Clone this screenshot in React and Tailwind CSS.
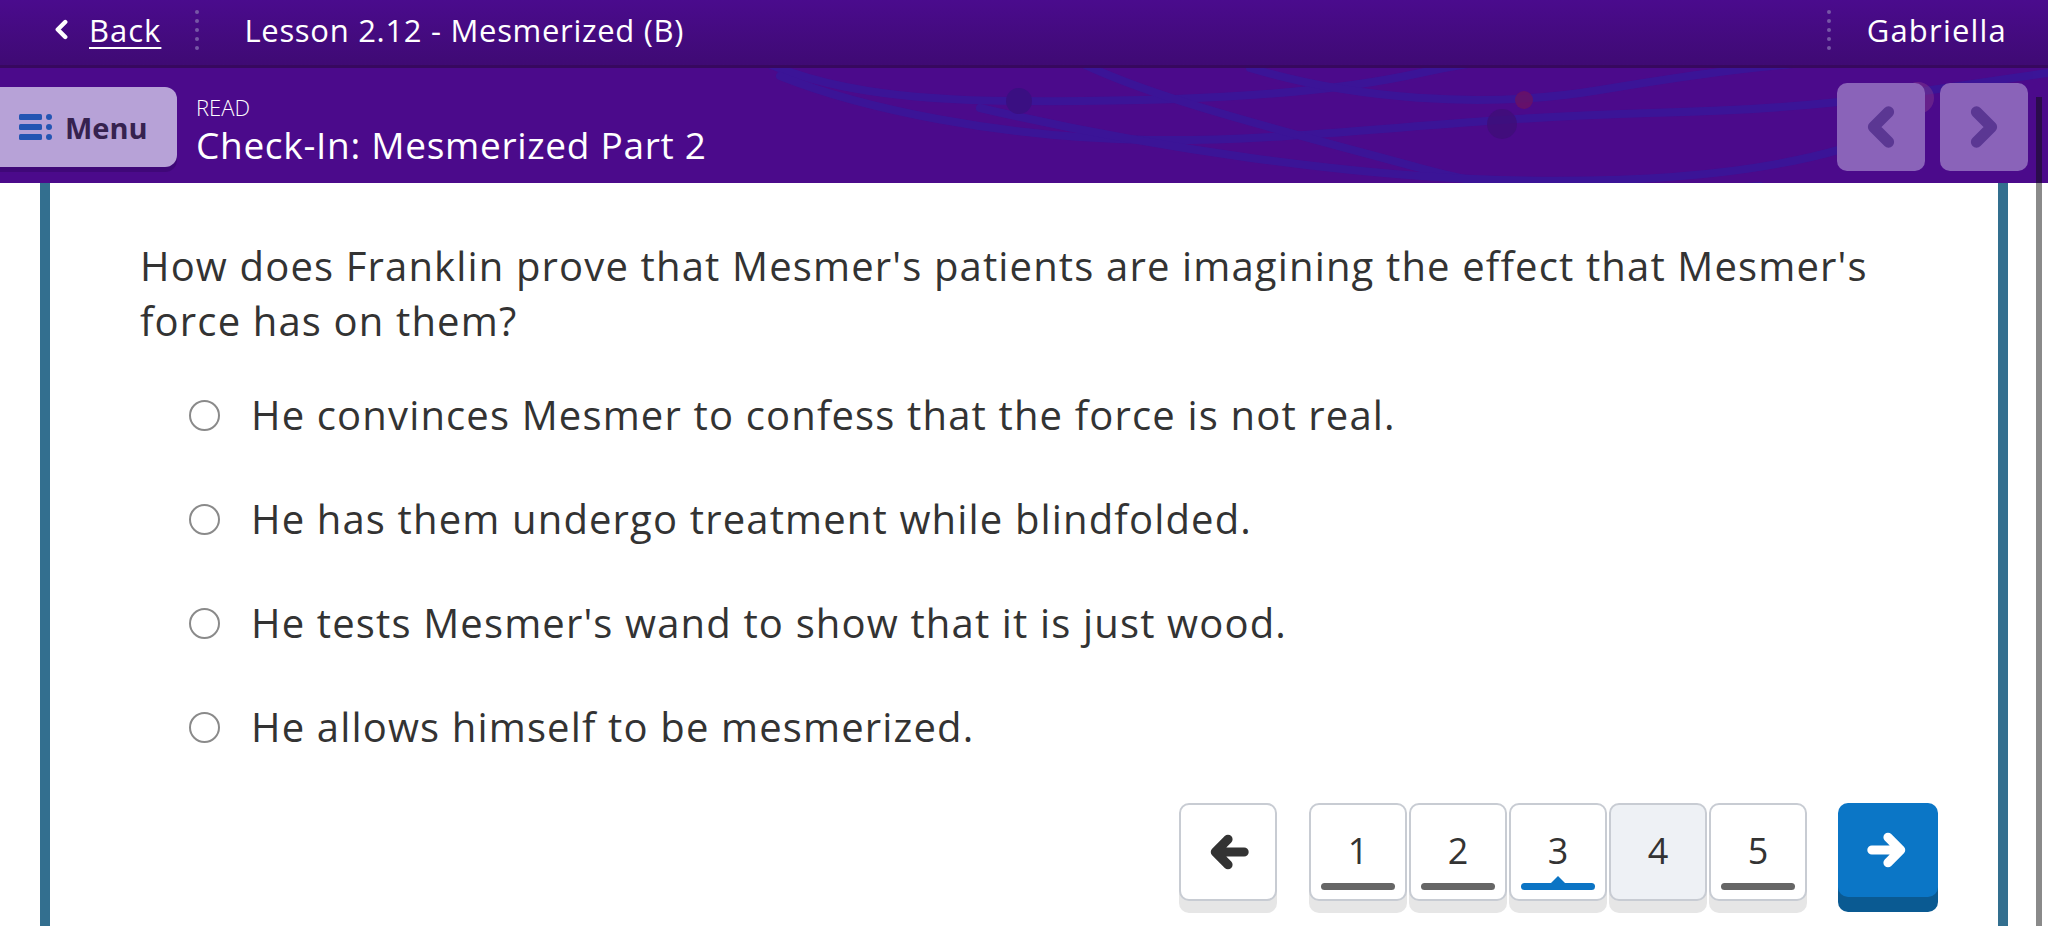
import { useState } from 'react';

const options = [
  "He convinces Mesmer to confess that the force is not real.",
  "He has them undergo treatment while blindfolded.",
  "He tests Mesmer's wand to show that it is just wood.",
  "He allows himself to be mesmerized.",
];

const pages = [
  { n: 1, state: 'done' },
  { n: 2, state: 'done' },
  { n: 3, state: 'current' },
  { n: 4, state: 'todo' },
  { n: 5, state: 'done' },
];

function Dots() {
  return (
    <div className="flex flex-col gap-[5px]">
      {[0, 1, 2, 3, 4].map(i => (
        <span key={i} className="w-[4px] h-[4px] rounded-full bg-[#7657a6]" />
      ))}
    </div>
  );
}

function Chevron({ dir = 'left', className, stroke = 'currentColor', width = 8 }) {
  const d = dir === 'left' ? 'M18 4 L6 16 L18 28' : 'M6 4 L18 16 L6 28';
  return (
    <svg viewBox="0 0 24 32" className={className} fill="none">
      <path d={d} stroke={stroke} strokeWidth={width} strokeLinecap="round" strokeLinejoin="round" />
    </svg>
  );
}

function Arrow({ dir = 'right', color }) {
  const d = dir === 'right' ? 'M6 20 H30 M20 9 L31 20 L20 31' : 'M34 20 H10 M20 9 L9 20 L20 31';
  return (
    <svg viewBox="0 0 40 40" className="w-[46px] h-[46px]" fill="none">
      <path d={d} stroke={color} strokeWidth="8" strokeLinecap="round" strokeLinejoin="round" />
    </svg>
  );
}

function MenuIcon() {
  return (
    <svg viewBox="0 0 34 26" className="w-[34px] h-[26px]">
      <rect x="0" y="0" width="23" height="6" rx="1.5" fill="#2455b3" />
      <rect x="0" y="10" width="23" height="6" rx="1.5" fill="#2455b3" />
      <rect x="0" y="20" width="23" height="6" rx="1.5" fill="#2455b3" />
      <circle cx="30" cy="3" r="3" fill="#2455b3" />
      <circle cx="30" cy="13" r="3" fill="#2455b3" />
      <circle cx="30" cy="23" r="3" fill="#2455b3" />
    </svg>
  );
}

function Curves() {
  return (
    <svg viewBox="0 0 2048 115" preserveAspectRatio="none" className="absolute inset-0 w-full h-full pointer-events-none" fill="none">
      <g stroke="#3a1699" strokeWidth="8" strokeLinecap="round" opacity="0.9">
        <path d="M760 -8 C820 20 900 32 1012 33 S1300 32 1420 5 S1700 -20 1800 -10" />
        <path d="M780 8 C860 40 1000 70 1150 72 S1450 50 1650 45 S1900 25 2048 5" />
        <path d="M1075 -8 C1150 30 1280 62 1420 100 S1640 125 1760 118" />
        <path d="M1250 0 C1350 30 1480 42 1600 22 S1780 -4 1850 -8" />
        <path d="M980 40 C1150 80 1350 108 1500 112 S1800 105 1900 60" />
      </g>
      <circle cx="1019" cy="33" r="13" fill="#3a0f82" />
      <circle cx="1524" cy="32" r="9" fill="#6b1163" opacity="0.8" />
      <circle cx="1502" cy="56" r="15" fill="#3f0e78" opacity="0.8" />
      <circle cx="1918" cy="30" r="16" fill="#9a4a8c" opacity="0.35" />
    </svg>
  );
}

function PageButton({ n, state }) {
  return (
    <div
      className={`relative w-[98px] h-[98px] rounded-[10px] border-2 border-[#c8ccd3] shadow-[0_12px_0_#e6e6e6] flex items-start justify-center ${
        state === 'todo' ? 'bg-[#eef1f5]' : 'bg-white'
      }`}
    >
      <span className="mt-[26px] text-[36px] leading-[40px] text-[#333]">{n}</span>
      {state === 'done' && (
        <span className="absolute left-[10px] right-[10px] bottom-[9px] h-[7px] rounded-full bg-[#666]" />
      )}
      {state === 'current' && (
        <>
          <span className="absolute left-[10px] right-[10px] bottom-[9px] h-[7px] rounded-full bg-[#0b74c4]" />
          <span className="absolute left-1/2 -translate-x-1/2 bottom-[15px] w-0 h-0 border-l-[8px] border-r-[8px] border-b-[8px] border-l-transparent border-r-transparent border-b-[#0b74c4]" />
        </>
      )}
    </div>
  );
}

export default function App() {
  const [selected, setSelected] = useState(null);

  return (
    <div className="relative w-full h-[926px] overflow-hidden bg-white font-['Open_Sans',sans-serif]">
      {/* top bar */}
      <div className="h-[68px] bg-gradient-to-b from-[#4a0b8d] to-[#3f0a74] border-b-[3px] border-[#37085f] flex items-center pb-[6px] text-white">
        <div className="flex items-center pl-[54px]">
          <Chevron dir="left" className="w-[15px] h-[21px]" stroke="#fff" width={7} />
          <span className="ml-[20px] text-[31px] leading-[40px] tracking-[1px] underline underline-offset-[5px] decoration-2">Back</span>
        </div>
        <div className="ml-[34px]"><Dots /></div>
        <span className="ml-[45px] text-[31px] leading-[40px] tracking-[0.7px]">Lesson 2.12 - Mesmerized (B)</span>
        <div className="ml-auto"><Dots /></div>
        <span className="ml-[36px] mr-[41px] text-[31px] leading-[40px] tracking-[1.2px]">Gabriella</span>
      </div>

      {/* activity bar */}
      <div className="relative h-[115px] bg-[#4b0a8b] flex items-start">
        <Curves />
        <div className="relative mt-[19px] w-[177px] h-[80px] rounded-r-[12px] bg-[#b7a2d7] shadow-[0_5px_0_#3f0878] flex items-center pl-[19px] gap-[12px]">
          <MenuIcon />
          <span className="text-[29px] font-bold text-[#36224f] leading-none">Menu</span>
        </div>
        <div className="relative ml-[19px] pt-[26px] flex flex-col text-white">
          <span className="text-[22px] leading-[26px] font-light">READ</span>
          <span className="mt-[3px] text-[37px] leading-[44px] tracking-[0.7px]">Check-In: Mesmerized Part 2</span>
        </div>
        <div className="relative ml-auto mr-[20px] mt-[15px] flex gap-[15px]">
          <button className="w-[88px] h-[88px] rounded-[10px] bg-[#8a63b9] flex items-center justify-center">
            <Chevron dir="left" className="w-[30px] h-[44px]" stroke="#5b3793" width={9} />
          </button>
          <button className="w-[88px] h-[88px] rounded-[10px] bg-[#8a63b9] flex items-center justify-center">
            <Chevron dir="right" className="w-[30px] h-[44px]" stroke="#5b3793" width={9} />
          </button>
        </div>
      </div>

      {/* question card */}
      <div className="mx-[40px] h-[743px] border-x-[10px] border-[#336f8f] bg-white text-[#333]">
        <p className="pl-[90px] pr-[30px] pt-[55px] text-[40px] leading-[55px] tracking-[1.15px]">
          How does Franklin prove that Mesmer's patients are imagining the effect that Mesmer's<br />
          force has on them?
        </p>
        <div className="mt-[15px] pl-[139px]">
          {options.map((o, i) => (
            <div key={i} className="h-[104px] flex items-center gap-[31px] cursor-pointer" onClick={() => setSelected(i)}>
              <span className="w-[31px] h-[31px] rounded-full border-[2.5px] border-[#8a8a8a] bg-white flex items-center justify-center">
                {selected === i && <span className="w-[15px] h-[15px] rounded-full bg-[#0b74c4]" />}
              </span>
              <span className="text-[40px] leading-[50px] tracking-[1.15px]">{o}</span>
            </div>
          ))}
        </div>
        <div className="mt-[24px] pr-[60px] flex justify-end items-start">
          <button className="w-[98px] h-[98px] rounded-[10px] border-2 border-[#c8ccd3] bg-white shadow-[0_12px_0_#e6e6e6] flex items-center justify-center">
            <Arrow dir="left" color="#333" />
          </button>
          <div className="ml-[32px] flex gap-[2px]">
            {pages.map(p => <PageButton key={p.n} {...p} />)}
          </div>
          <button className="ml-[31px] w-[100px] h-[94px] rounded-[10px] bg-[#0b76c6] shadow-[0_15px_0_#0a5a92] flex items-center justify-center">
            <Arrow dir="right" color="#fff" />
          </button>
        </div>
      </div>

      {/* scrollbar */}
      <div className="absolute right-[6px] top-[97px] w-[6px] h-[86px] bg-[#2b0c4c]" />
      <div className="absolute right-[6px] top-[183px] w-[6px] bottom-0 bg-[#8a8a8a]" />
    </div>
  );
}
